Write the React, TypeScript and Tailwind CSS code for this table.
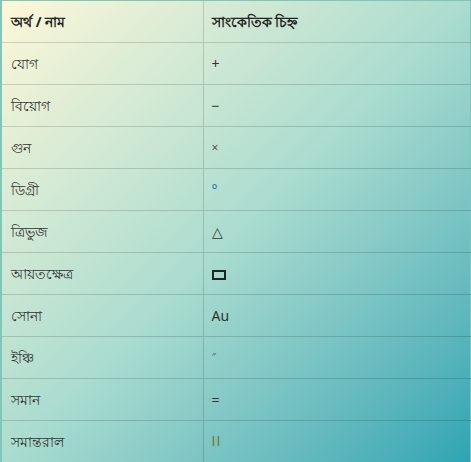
export default function App() {
  const rows = [
    { name: 'যোগ', sign: '+', tone: 'text-[#333]' },
    { name: 'বিয়োগ', sign: '−', tone: 'text-[#333]' },
    { name: 'গুন', sign: '×', tone: 'text-[#555] text-[12px]' },
    { name: 'ডিগ্রী', sign: '°', tone: 'text-[#2a6fb8]' },
    { name: 'ত্রিভুজ', sign: '△', tone: 'text-[#333]' },
    { name: 'আয়তক্ষেত্র', sign: 'rect', tone: '' },
    { name: 'সোনা', sign: 'Au', tone: 'text-[#333]' },
    { name: 'ইঞ্চি', sign: '″', tone: 'text-[#4a6f8a] text-[11px]' },
    { name: 'সমান', sign: '=', tone: 'text-[#333]' },
    { name: 'সমান্তরাল', sign: 'II', tone: "text-[#7a7a2a] font-['Liberation_Sans',sans-serif] tracking-[1px]" },
  ]

  return (
    <div className="w-[471px] h-[462px] overflow-hidden font-['Noto_Sans',sans-serif] text-[14px] text-[#333]">
      <table className="w-full border-collapse border-t border-l-2 border-r border-[#7fc6bd] bg-linear-to-br from-[#fdf7d8] via-[#aadccf] to-[#2ba4b3]">
        <thead>
          <tr className="h-[42px] border-b border-black/15">
            <th className="w-[202px] pl-[9px] pr-2 text-left font-bold text-[#222] border-r border-black/15">অর্থ / নাম</th>
            <th className="px-2 text-left font-bold text-[#222]">সাংকেতিক চিহ্ন</th>
          </tr>
        </thead>
        <tbody>
          {rows.map((row, i) => (
            <tr key={i} className="h-[42px] border-b border-black/15">
              <td className="pl-[9px] pr-2 border-r border-black/15">{row.name}</td>
              <td className={'px-2 ' + row.tone}>
                {row.sign === 'rect' ? (
                  <div className="w-[14px] h-[10px] border-2 border-[#222] mt-[2px]" />
                ) : (
                  row.sign
                )}
              </td>
            </tr>
          ))}
        </tbody>
      </table>
    </div>
  )
}
